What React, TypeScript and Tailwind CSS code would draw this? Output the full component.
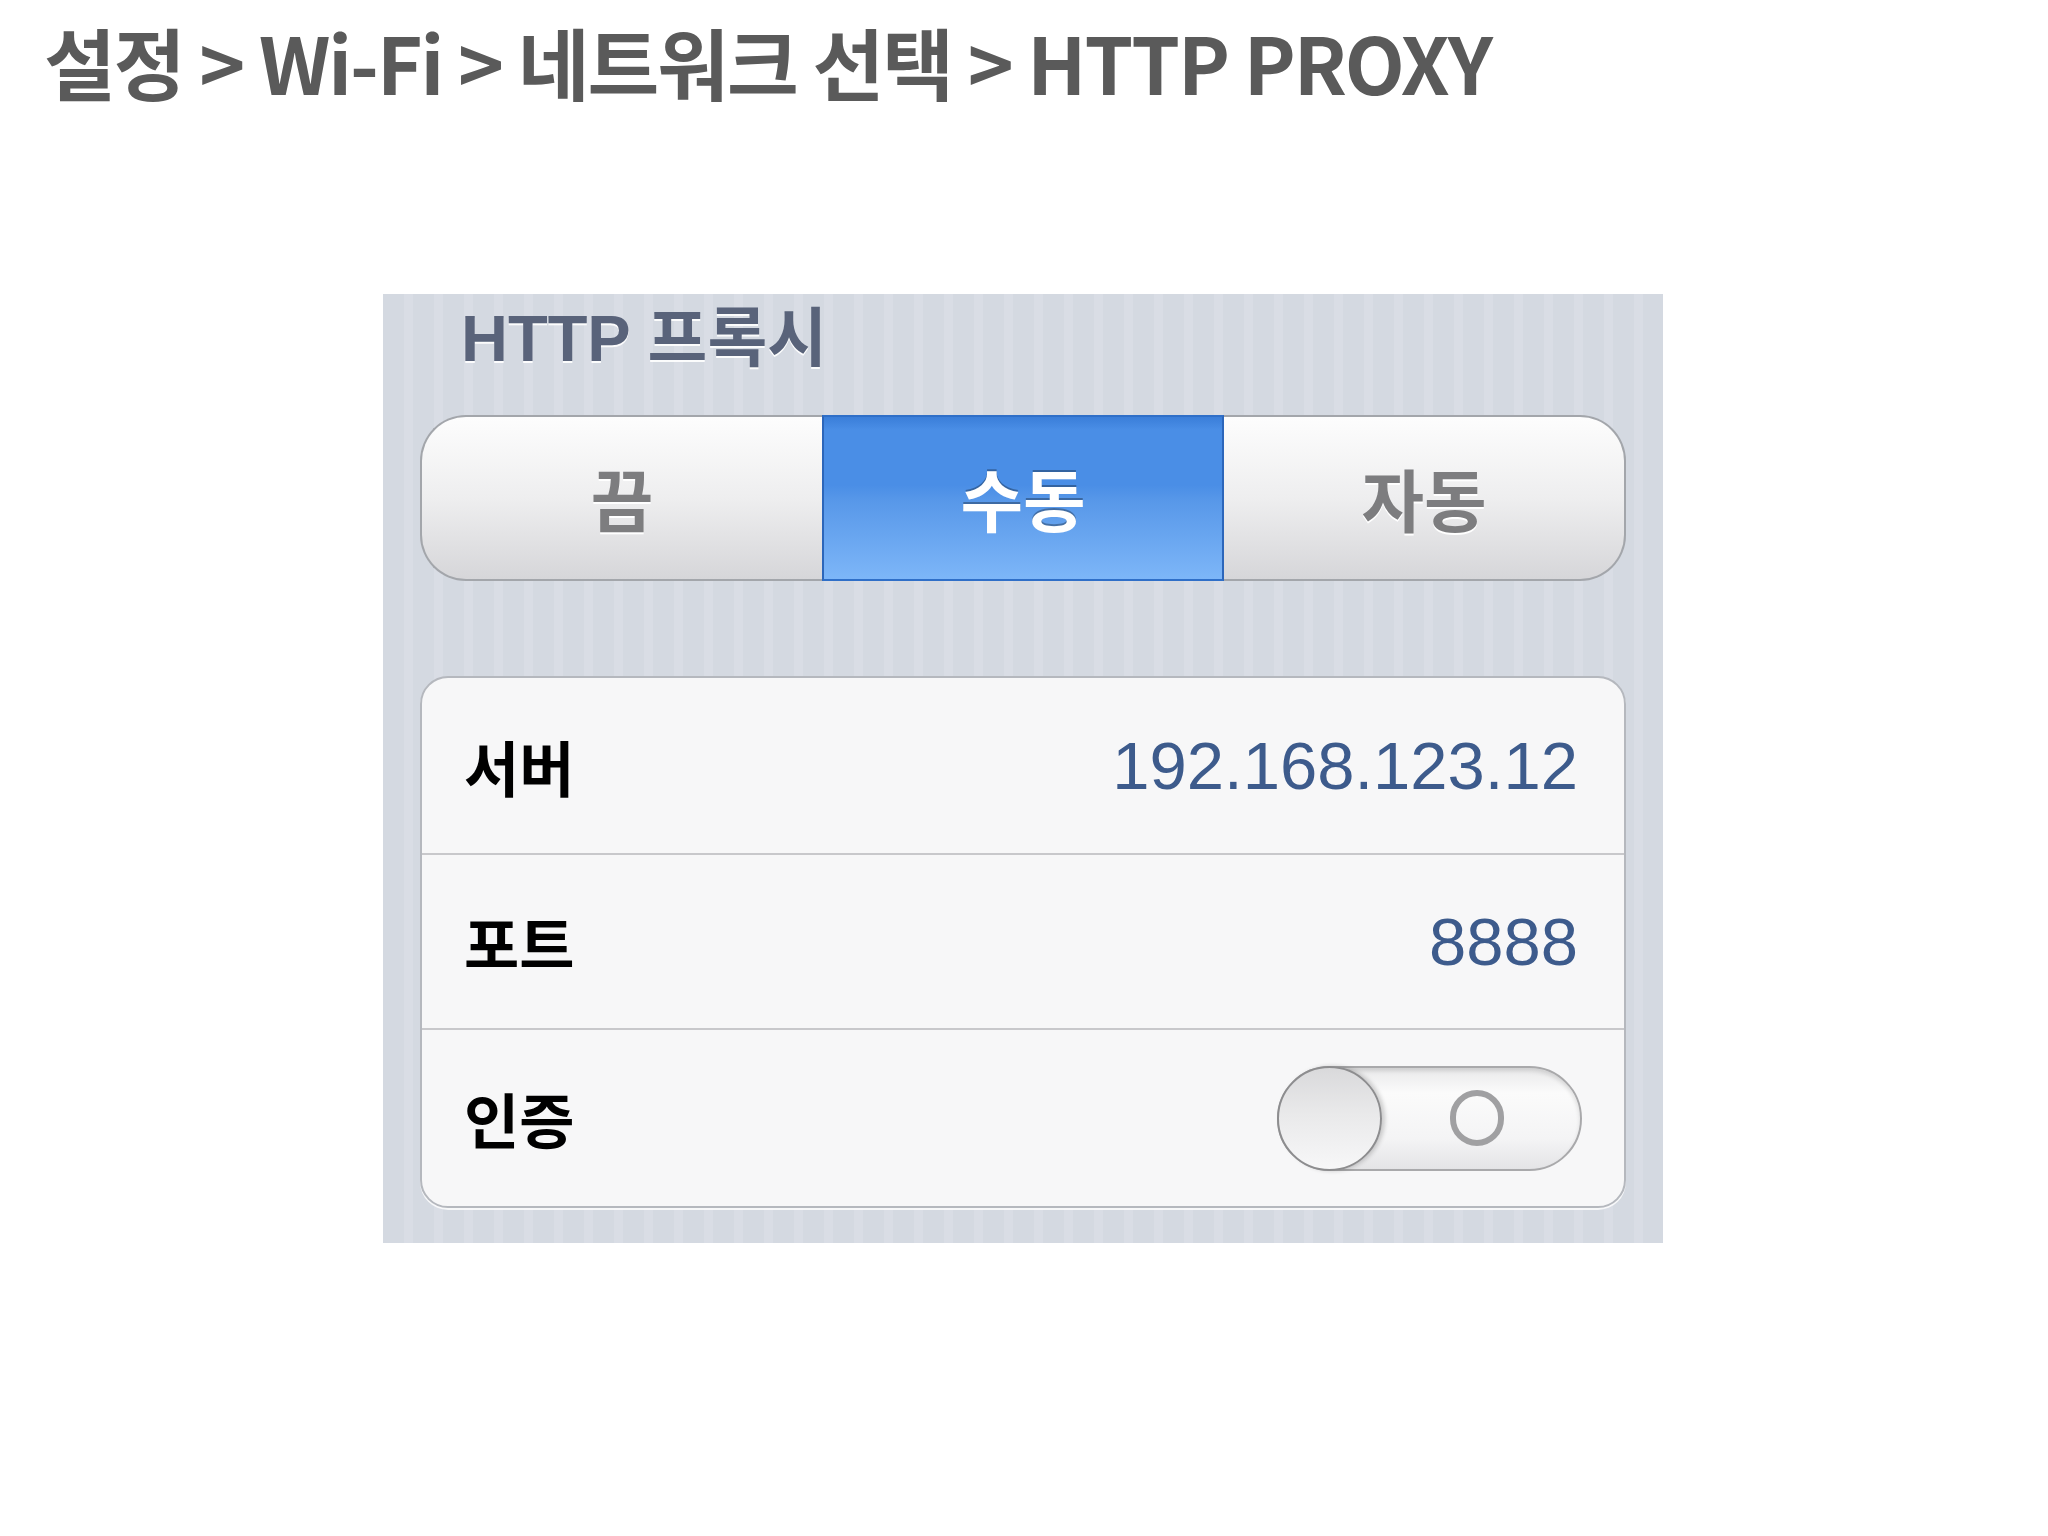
const rows = [
  { label: "서버", value: "192.168.123.12" },
  { label: "포트", value: "8888" },
];

function Toggle() {
  return (
    <div className="flex h-[105px] w-[305px] items-center rounded-full border-2 border-[#a9a9ab] bg-[linear-gradient(to_bottom,#e9e9ea,#fbfbfb_25%,#f4f4f5_70%,#e4e4e6)] shadow-[inset_0_3px_4px_rgba(0,0,0,0.12)]">
      <div className="-ml-[2px] h-[105px] w-[105px] shrink-0 rounded-full border-2 border-[#8d8d8f] bg-[linear-gradient(to_bottom,#d9d9db,#e9e9ea_45%,#f7f7f8)] shadow-[3px_0_4px_rgba(0,0,0,0.18)]" />
      <div className="flex flex-1 justify-center pr-[8px]">
        <div className="h-[56px] w-[54px] rounded-full border-[6px] border-[#a0a0a2]" />
      </div>
    </div>
  );
}

export default function App() {
  return (
    <div className="min-h-screen bg-white font-['Noto_Sans_CJK_KR',sans-serif]">
      <h1 className="pl-[44px] pt-[22px] text-[78px] font-bold leading-none tracking-[-2px] text-[#5a5a5a]">
        설정 &gt; Wi-Fi &gt; 네트워크 선택 &gt; HTTP PROXY
      </h1>

      <div className="ml-[383px] mt-[194px] w-[1280px] bg-[repeating-linear-gradient(90deg,#d4d9e1_0px,#d4d9e1_21px,#d9dde5_21px,#d9dde5_30px)] px-[37px] pb-[35px] pt-[12px]">
        <div className="h-[64px] pl-[41px] font-['Liberation_Sans','Noto_Sans_CJK_KR',sans-serif] text-[65px] font-bold leading-none text-[#59637a] [text-shadow:0_2px_0_rgba(255,255,255,0.9)]">
          HTTP 프록시
        </div>

        <div className="mt-[45px] grid h-[166px] grid-cols-3">
          <div className="flex items-center justify-center rounded-l-[46px] border-2 border-r-0 border-[#a3a6ab] bg-[linear-gradient(to_bottom,#fdfdfd,#eeeeef_50%,#d6d6d9)] text-[68px] font-bold text-[#7d7d7f] [text-shadow:0_2px_0_#ffffff]">
            끔
          </div>
          <div className="flex items-center justify-center border-x-2 border-y-2 border-x-[#2c66ba] border-y-[#2f6fc8] bg-[linear-gradient(to_bottom,#3a7ed9,#4a8ee6_8%,#4a8ee6_42%,#5898e9_52%,#7db6f8)] text-[68px] font-bold text-white [text-shadow:0_-2px_0_rgba(0,0,0,0.3)]">
            수동
          </div>
          <div className="flex items-center justify-center rounded-r-[46px] border-2 border-l-0 border-[#a3a6ab] bg-[linear-gradient(to_bottom,#fdfdfd,#eeeeef_50%,#d6d6d9)] text-[68px] font-bold text-[#7d7d7f] [text-shadow:0_2px_0_#ffffff]">
            자동
          </div>
        </div>

        <div className="mt-[95px] overflow-hidden rounded-[28px] border-2 border-[#b5b8be] bg-[#f7f7f8] shadow-[0_2px_0_rgba(255,255,255,0.8)]">
          {rows.map((row, i) => (
            <div
              key={row.label}
              className={`flex h-[175px] items-center justify-between pl-[42px] pr-[46px] ${i > 0 ? "border-t-2 border-[#c8c8cb]" : ""}`}
            >
              <span className="text-[60px] font-bold leading-none text-black">{row.label}</span>
              <span className="font-['Liberation_Sans',sans-serif] text-[67px] leading-none text-[#3d5b8c]">
                {row.value}
              </span>
            </div>
          ))}
          <div className="flex h-[178px] items-center justify-between border-t-2 border-[#c8c8cb] pl-[42px] pr-[42px]">
            <span className="text-[60px] font-bold leading-none text-black">인증</span>
            <Toggle />
          </div>
        </div>
      </div>
    </div>
  );
}
